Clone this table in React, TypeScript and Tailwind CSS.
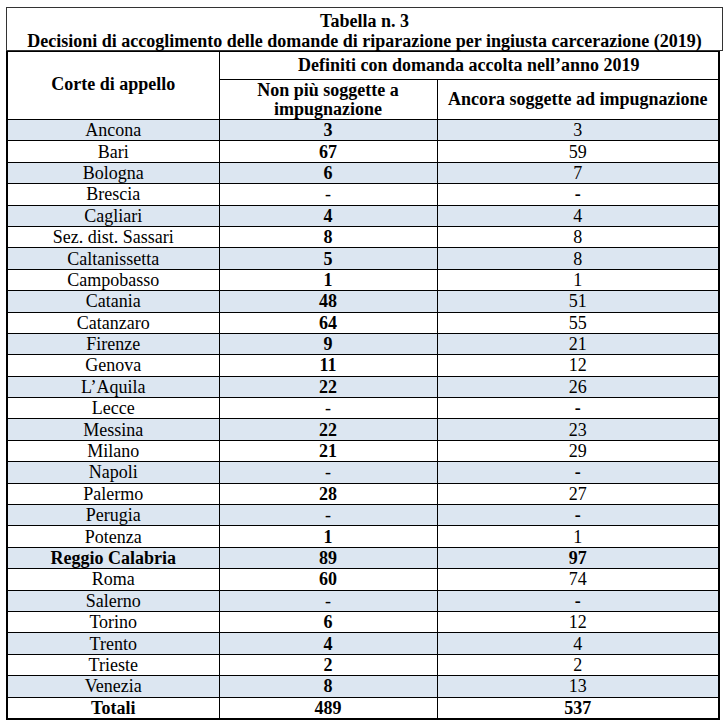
const rows: [string, string, string, boolean?][] = [
  ["Ancona", "3", "3"],
  ["Bari", "67", "59"],
  ["Bologna", "6", "7"],
  ["Brescia", "-", "-"],
  ["Cagliari", "4", "4"],
  ["Sez. dist. Sassari", "8", "8"],
  ["Caltanissetta", "5", "8"],
  ["Campobasso", "1", "1"],
  ["Catania", "48", "51"],
  ["Catanzaro", "64", "55"],
  ["Firenze", "9", "21"],
  ["Genova", "11", "12"],
  ["L’Aquila", "22", "26"],
  ["Lecce", "-", "-"],
  ["Messina", "22", "23"],
  ["Milano", "21", "29"],
  ["Napoli", "-", "-"],
  ["Palermo", "28", "27"],
  ["Perugia", "-", "-"],
  ["Potenza", "1", "1"],
  ["Reggio Calabria", "89", "97", true],
  ["Roma", "60", "74"],
  ["Salerno", "-", "-"],
  ["Torino", "6", "12"],
  ["Trento", "4", "4"],
  ["Trieste", "2", "2"],
  ["Venezia", "8", "13"],
];

export default function App() {
  return (
    <div
      className="bg-white pt-[7px] pl-[6px] text-black h-[728px]"
      style={{ fontFamily: '"Liberation Serif", "Times New Roman", serif' }}
    >
      <div className="w-[717px] h-[44px] pt-[3px] border border-[#333] flex flex-col items-center justify-center font-bold text-[18px] leading-[20px]">
        <div>Tabella n. 3</div>
        <div>
          Decisioni di accoglimento delle domande di riparazione per ingiusta
          carcerazione (2019)
        </div>
      </div>
      <div className="w-[714px] border-2 border-t border-black">
        <table className="w-full border-collapse border-hidden table-fixed text-[18px]">
          <colgroup>
            <col className="w-[211px]" />
            <col className="w-[218px]" />
            <col />
          </colgroup>
          <thead>
            <tr className="h-[27px]">
              <th
                rowSpan={2}
                className="border border-black font-bold align-middle pb-[2px]"
              >
                Corte di appello
              </th>
              <th colSpan={2} className="border border-black font-bold">
                Definiti con domanda accolta nell’anno 2019
              </th>
            </tr>
            <tr className="h-[40px]">
              <th className="border border-black font-bold leading-[19px]">
                Non più soggette a<br />
                impugnazione
              </th>
              <th className="border border-black font-bold">
                Ancora soggette ad impugnazione
              </th>
            </tr>
          </thead>
          <tbody className="leading-[20px]">
            {rows.map(([name, a, b, bold], i) => (
              <tr
                key={name}
                className={`h-[21.4px] ${i % 2 === 0 ? "bg-[#dce6f1]" : "bg-white"}`}
              >
                <td
                  className={`border border-black text-center p-0 ${bold ? "font-bold" : ""}`}
                >
                  {name}
                </td>
                <td
                  className={`border border-black text-center p-0 ${a === "-" ? "" : "font-bold"}`}
                >
                  {a}
                </td>
                <td
                  className={`border border-black text-center p-0 ${bold || b === "-" ? "font-bold" : ""}`}
                >
                  {b}
                </td>
              </tr>
            ))}
            <tr className="h-[21.4px] bg-white font-bold">
              <td className="border border-black text-center p-0">Totali</td>
              <td className="border border-black text-center p-0">489</td>
              <td className="border border-black text-center p-0">537</td>
            </tr>
          </tbody>
        </table>
      </div>
    </div>
  );
}
